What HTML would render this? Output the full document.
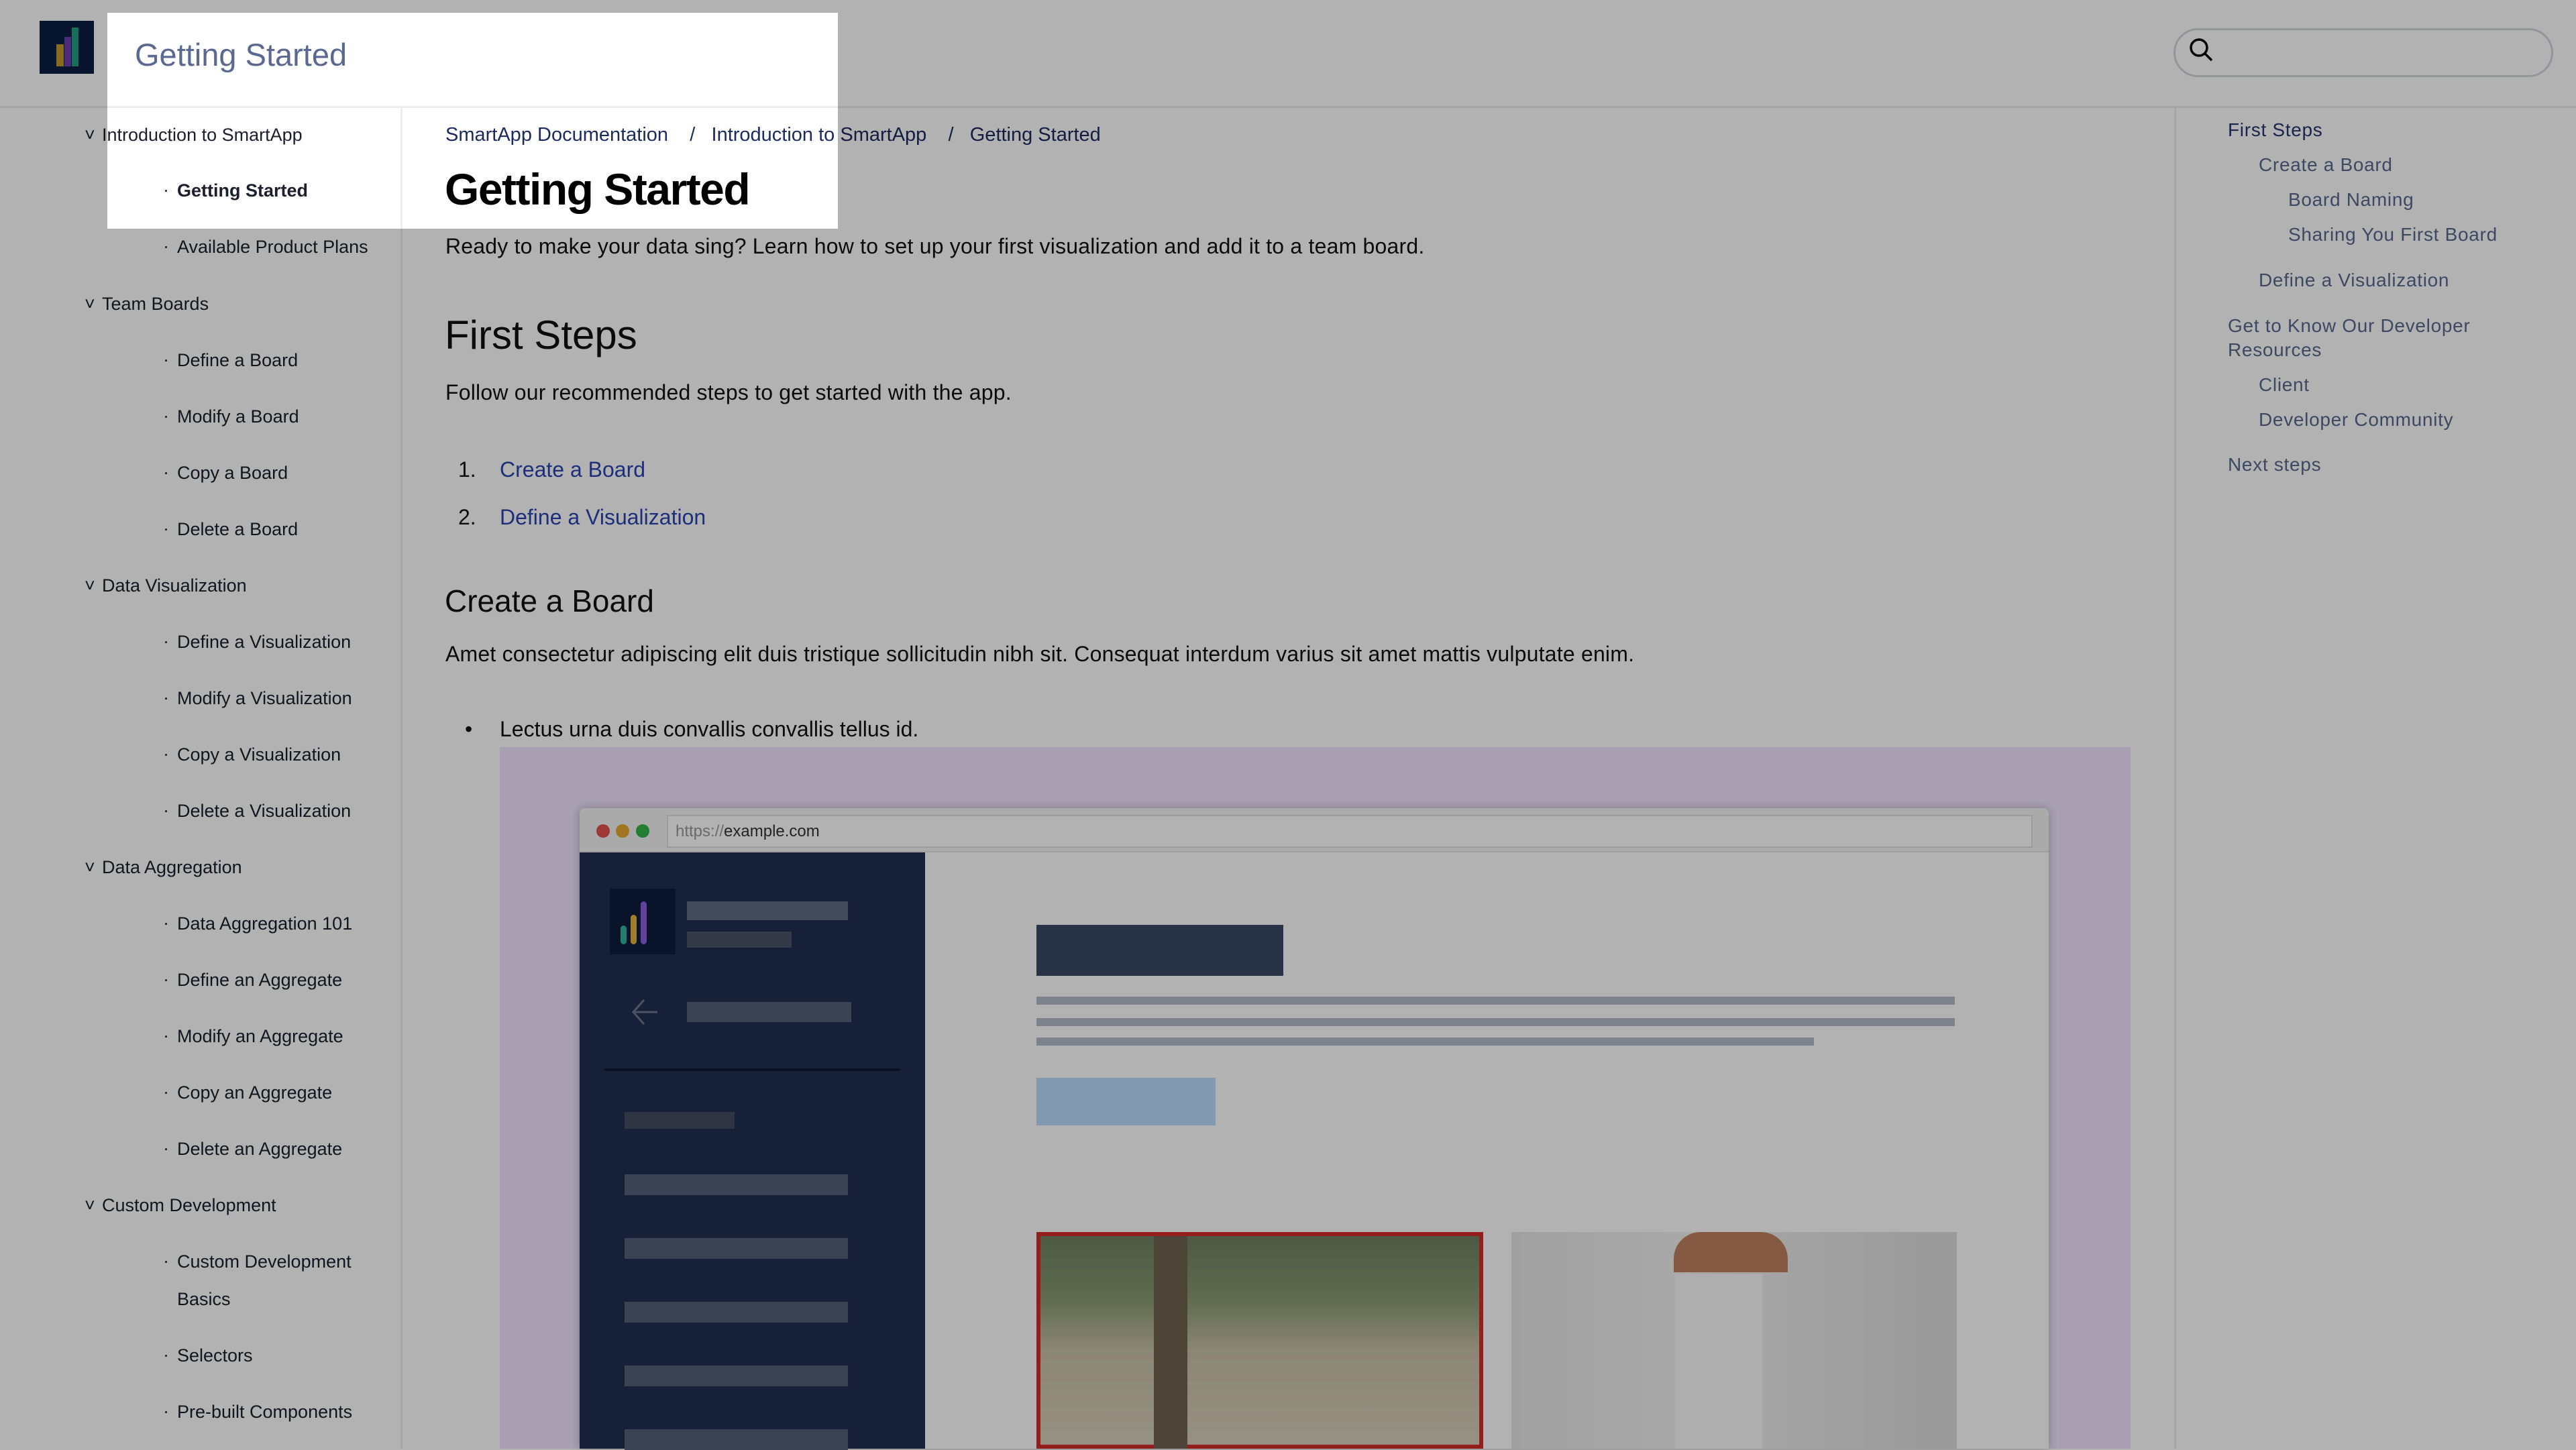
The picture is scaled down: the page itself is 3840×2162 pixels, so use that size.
<!DOCTYPE html>
<html><head><meta charset="utf-8"><style>
*{margin:0;padding:0;box-sizing:border-box}
body{width:3840px;height:2160px;overflow:hidden;background:#fff;font-family:"Liberation Sans",sans-serif;position:relative;color:#111}
.a{position:absolute;white-space:nowrap}
.sb{font-size:27px;line-height:40px;color:#1b1f2e}
.toc{font-size:28px;line-height:40px;color:#58688f;letter-spacing:0.7px}
.bar{position:absolute}
</style></head><body>
<!-- header -->
<div class="bar" style="left:0;top:158px;width:3840px;height:3px;background:#ececf1"></div>
<div class="bar" style="left:59px;top:31px;width:81px;height:79px;background:#0b2043"></div>
<div class="bar" style="left:84px;top:66px;width:11px;height:33px;background:#c49a2c"></div>
<div class="bar" style="left:96px;top:55px;width:10px;height:44px;background:#6a3fb0"></div>
<div class="bar" style="left:107px;top:41px;width:10px;height:58px;background:#20a083"></div>
<div class="a" style="left:201px;top:56px;font-size:47px;line-height:52px;color:#5b6891">Getting Started</div>
<div class="bar" style="left:3240px;top:42px;width:566px;height:73px;border:3px solid #d4d6dc;border-radius:37px"></div>
<svg class="a" style="left:3257px;top:50px" width="50" height="50" viewBox="0 0 50 50"><circle cx="21" cy="21" r="12" fill="none" stroke="#000" stroke-width="3.5"/><line x1="30" y1="30" x2="40" y2="40" stroke="#000" stroke-width="3.5"/></svg>
<!-- sidebar -->
<div class="bar" style="left:597px;top:160px;width:3px;height:2000px;background:#ececf1"></div>
<div class="a sb" style="left:126px;top:181px">˅</div><div class="a sb" style="left:152px;top:181px">Introduction to SmartApp</div>
<div class="a sb" style="left:243px;top:263px">·</div><div class="a sb" style="left:264px;top:264px;font-weight:bold">Getting Started</div>
<div class="a sb" style="left:243px;top:347px">·</div><div class="a sb" style="left:264px;top:348px">Available Product Plans</div>
<div class="a sb" style="left:126px;top:433px">˅</div><div class="a sb" style="left:152px;top:433px">Team Boards</div>
<div class="a sb" style="left:243px;top:516px">·</div><div class="a sb" style="left:264px;top:517px">Define a Board</div>
<div class="a sb" style="left:243px;top:600px">·</div><div class="a sb" style="left:264px;top:601px">Modify a Board</div>
<div class="a sb" style="left:243px;top:684px">·</div><div class="a sb" style="left:264px;top:685px">Copy a Board</div>
<div class="a sb" style="left:243px;top:768px">·</div><div class="a sb" style="left:264px;top:769px">Delete a Board</div>
<div class="a sb" style="left:126px;top:853px">˅</div><div class="a sb" style="left:152px;top:853px">Data Visualization</div>
<div class="a sb" style="left:243px;top:936px">·</div><div class="a sb" style="left:264px;top:937px">Define a Visualization</div>
<div class="a sb" style="left:243px;top:1020px">·</div><div class="a sb" style="left:264px;top:1021px">Modify a Visualization</div>
<div class="a sb" style="left:243px;top:1104px">·</div><div class="a sb" style="left:264px;top:1105px">Copy a Visualization</div>
<div class="a sb" style="left:243px;top:1188px">·</div><div class="a sb" style="left:264px;top:1189px">Delete a Visualization</div>
<div class="a sb" style="left:126px;top:1273px">˅</div><div class="a sb" style="left:152px;top:1273px">Data Aggregation</div>
<div class="a sb" style="left:243px;top:1356px">·</div><div class="a sb" style="left:264px;top:1357px">Data Aggregation 101</div>
<div class="a sb" style="left:243px;top:1440px">·</div><div class="a sb" style="left:264px;top:1441px">Define an Aggregate</div>
<div class="a sb" style="left:243px;top:1524px">·</div><div class="a sb" style="left:264px;top:1525px">Modify an Aggregate</div>
<div class="a sb" style="left:243px;top:1608px">·</div><div class="a sb" style="left:264px;top:1609px">Copy an Aggregate</div>
<div class="a sb" style="left:243px;top:1692px">·</div><div class="a sb" style="left:264px;top:1693px">Delete an Aggregate</div>
<div class="a sb" style="left:126px;top:1777px">˅</div><div class="a sb" style="left:152px;top:1777px">Custom Development</div>
<div class="a sb" style="left:243px;top:1860px">·</div><div class="a sb" style="left:264px;top:1861px">Custom Development</div>
<div class="a sb" style="left:264px;top:1917px">Basics</div>
<div class="a sb" style="left:243px;top:2000px">·</div><div class="a sb" style="left:264px;top:2001px">Selectors</div>
<div class="a sb" style="left:243px;top:2084px">·</div><div class="a sb" style="left:264px;top:2085px">Pre-built Components</div>
<!-- main -->
<div class="a" style="left:664px;top:181px;font-size:29px;line-height:40px;color:#1c2a5e">SmartApp Documentation &nbsp;&nbsp;&nbsp;/ &nbsp;&nbsp;Introduction to SmartApp &nbsp;&nbsp;&nbsp;/ &nbsp;&nbsp;Getting Started</div>
<div class="a" style="left:663px;top:240px;font-size:66px;line-height:84px;font-weight:bold;letter-spacing:-1.5px;color:#000">Getting Started</div>
<div class="a" style="left:664px;top:347px;font-size:32px;line-height:40px;letter-spacing:0.2px">Ready to make your data sing? Learn how to set up your first visualization and add it to a team board.</div>
<div class="a" style="left:663px;top:464px;font-size:60px;line-height:72px">First Steps</div>
<div class="a" style="left:664px;top:565px;font-size:32px;line-height:40px;letter-spacing:0.2px">Follow our recommended steps to get started with the app.</div>
<div class="a" style="left:683px;top:680px;font-size:32px;line-height:40px">1.</div>
<div class="a" style="left:745px;top:680px;font-size:32px;line-height:40px;color:#2a43b0">Create a Board</div>
<div class="a" style="left:683px;top:751px;font-size:32px;line-height:40px">2.</div>
<div class="a" style="left:745px;top:751px;font-size:32px;line-height:40px;color:#2a43b0">Define a Visualization</div>
<div class="a" style="left:663px;top:868px;font-size:46px;line-height:56px">Create a Board</div>
<div class="a" style="left:664px;top:955px;font-size:32px;line-height:40px;letter-spacing:0.2px">Amet consectetur adipiscing elit duis tristique sollicitudin nibh sit. Consequat interdum varius sit amet mattis vulputate enim.</div>
<div class="a" style="left:693px;top:1067px;font-size:32px;line-height:40px">•</div>
<div class="a" style="left:745px;top:1067px;font-size:32px;line-height:40px">Lectus urna duis convallis convallis tellus id.</div>
<!-- purple frame -->
<div class="bar" style="left:745px;top:1114px;width:2431px;height:1046px;background:#f1e6ff"></div>
<div class="bar" style="left:864px;top:1205px;width:2190px;height:955px;background:#fff;box-shadow:0 0 14px rgba(0,0,0,.25);border-radius:8px 8px 0 0"></div>
<div class="bar" style="left:864px;top:1205px;width:2190px;height:66px;background:#f4f4f4;border-bottom:2px solid #e4e4e4;border-radius:8px 8px 0 0"></div>
<div class="bar" style="left:889px;top:1229px;width:20px;height:20px;border-radius:50%;background:#e2514b"></div>
<div class="bar" style="left:918px;top:1229px;width:20px;height:20px;border-radius:50%;background:#e9a930"></div>
<div class="bar" style="left:948px;top:1229px;width:20px;height:20px;border-radius:50%;background:#33b34a"></div>
<div class="bar" style="left:994px;top:1215px;width:2036px;height:49px;background:#fff;border:2px solid #e0e0e0"></div>
<div class="a" style="left:1007px;top:1225px;font-size:24px;line-height:30px;color:#333"><span style="color:#999">https://</span>example.com</div>
<div class="bar" style="left:864px;top:1271px;width:515px;height:889px;background:#222f52"></div>
<div class="bar" style="left:909px;top:1325px;width:98px;height:98px;background:#0d1c3c"></div>
<div class="bar" style="left:925px;top:1380px;width:9px;height:28px;border-radius:5px;background:#2fb59c"></div>
<div class="bar" style="left:940px;top:1364px;width:9px;height:44px;border-radius:5px;background:#e4b43e"></div>
<div class="bar" style="left:955px;top:1344px;width:9px;height:64px;border-radius:5px;background:#8d5ee0"></div>
<div class="bar" style="left:1024px;top:1344px;width:240px;height:28px;background:#5f6a80"></div>
<div class="bar" style="left:1024px;top:1389px;width:156px;height:24px;background:#4a5266"></div>
<svg class="a" style="left:938px;top:1485px" width="46" height="48" viewBox="0 0 46 48"><path d="M22 6 L6 24 L22 42 M6 24 H42" fill="none" stroke="#6f7890" stroke-width="3"/></svg>
<div class="bar" style="left:1024px;top:1494px;width:245px;height:30px;background:#56607a"></div>
<div class="bar" style="left:901px;top:1593px;width:441px;height:4px;background:#121a30"></div>
<div class="bar" style="left:931px;top:1658px;width:164px;height:25px;background:#454d60"></div>
<div class="bar" style="left:931px;top:1751px;width:333px;height:31px;background:#56607a"></div>
<div class="bar" style="left:931px;top:1846px;width:333px;height:31px;background:#56607a"></div>
<div class="bar" style="left:931px;top:1941px;width:333px;height:31px;background:#56607a"></div>
<div class="bar" style="left:931px;top:2036px;width:333px;height:31px;background:#56607a"></div>
<div class="bar" style="left:931px;top:2131px;width:333px;height:31px;background:#56607a"></div>
<div class="bar" style="left:1545px;top:1379px;width:368px;height:76px;background:#3c4a66"></div>
<div class="bar" style="left:1545px;top:1486px;width:1369px;height:12px;background:#b4bccb"></div>
<div class="bar" style="left:1545px;top:1518px;width:1369px;height:12px;background:#b4bccb"></div>
<div class="bar" style="left:1545px;top:1547px;width:1159px;height:12px;background:#b4bccb"></div>
<div class="bar" style="left:1545px;top:1607px;width:267px;height:71px;background:#bbdbff"></div>
<div class="bar" style="left:1545px;top:1837px;width:666px;height:323px;border:6px solid #d42a2a;background:linear-gradient(180deg,#6f8060 0%,#8a9a74 30%,#c9c0a8 55%,#d8d0bc 100%)"></div>
<div class="bar" style="left:1720px;top:1843px;width:50px;height:317px;background:#6e6250"></div>
<div class="bar" style="left:2253px;top:1837px;width:664px;height:323px;background:linear-gradient(90deg,#e6e6e6,#f2f2f2 40%,#dcdcdc)"></div>
<div class="bar" style="left:2495px;top:1837px;width:170px;height:60px;border-radius:40px 40px 0 0;background:#c08060"></div>
<div class="bar" style="left:2497px;top:1900px;width:130px;height:260px;background:#fafafa"></div>
<!-- toc -->
<div class="bar" style="left:3241px;top:160px;width:3px;height:2000px;background:#ececf1"></div>
<div class="a toc" style="left:3321px;top:174px;color:#253670">First Steps</div>
<div class="a toc" style="left:3367px;top:226px">Create a Board</div>
<div class="a toc" style="left:3411px;top:278px">Board Naming</div>
<div class="a toc" style="left:3411px;top:330px">Sharing You First Board</div>
<div class="a toc" style="left:3367px;top:398px">Define a Visualization</div>
<div class="a toc" style="left:3321px;top:466px">Get to Know Our Developer</div>
<div class="a toc" style="left:3321px;top:502px">Resources</div>
<div class="a toc" style="left:3367px;top:554px">Client</div>
<div class="a toc" style="left:3367px;top:606px">Developer Community</div>
<div class="a toc" style="left:3321px;top:673px">Next steps</div>
<!-- spotlight overlay -->
<div class="bar" style="left:160px;top:19px;width:1089px;height:322px;box-shadow:0 0 0 5000px rgba(0,0,0,.3)"></div>
</body></html>
